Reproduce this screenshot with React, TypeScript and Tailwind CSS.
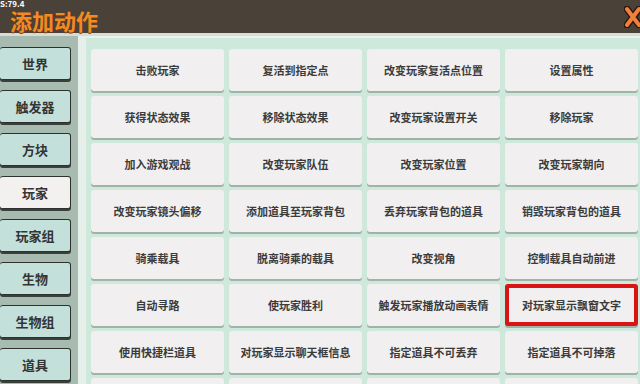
import React from "react";

const CATEGORIES = ["世界", "触发器", "方块", "玩家", "玩家组", "生物", "生物组", "道具"];
const ACTIVE = "玩家";

const ACTIONS = [
  "击败玩家", "复活到指定点", "改变玩家复活点位置", "设置属性",
  "获得状态效果", "移除状态效果", "改变玩家设置开关", "移除玩家",
  "加入游戏观战", "改变玩家队伍", "改变玩家位置", "改变玩家朝向",
  "改变玩家镜头偏移", "添加道具至玩家背包", "丢弃玩家背包的道具", "销毁玩家背包的道具",
  "骑乘载具", "脱离骑乘的载具", "改变视角", "控制载具自动前进",
  "自动寻路", "使玩家胜利", "触发玩家播放动画表情", "对玩家显示飘窗文字",
  "使用快捷栏道具", "对玩家显示聊天框信息", "指定道具不可丢弃", "指定道具不可掉落",
  "", "", "", "",
];
const HIGHLIGHT = "对玩家显示飘窗文字";

const FONT = { fontFamily: '"Noto Sans CJK SC", "Noto Sans", sans-serif' };

export default function App() {
  return (
    <div className="w-[640px] h-[384px] overflow-hidden flex flex-col bg-[#cfe8dc]" style={FONT}>
      {/* header */}
      <header className="relative h-[33px] shrink-0 bg-[#4a4139] flex items-center pl-[10px]">
        <span className="absolute left-0 top-0 text-[8px] leading-[8px] text-white font-bold z-10">S:79.4</span>
        <h1
          className="text-[22px] leading-none font-bold text-[#f38b25] mt-[6px]"
          style={{ textShadow: "0 1px 0 #6b3a10" }}
        >
          添加动作
        </h1>
        <svg className="ml-auto mr-[-2px]" width="18" height="22" viewBox="0 0 18 22">
          <path d="M3 3 L15 19 M15 3 L3 19" stroke="#2a1a10" strokeWidth="7" strokeLinecap="round" />
          <path d="M3 3 L15 19 M15 3 L3 19" stroke="#f3803a" strokeWidth="4" strokeLinecap="round" />
        </svg>
      </header>
      <div className="h-[3px] shrink-0 bg-[#d9dcd6]" />

      <div className="flex flex-1 min-h-0">
        {/* sidebar */}
        <aside className="w-[78px] shrink-0 bg-[#a7bbb0] pt-[11px] flex flex-col gap-[10px]">
          {CATEGORIES.map((c) => (
            <button
              key={c}
              className={`w-[71px] h-[33px] shrink-0 rounded-[3px] border border-[#2e322f] border-l-0 shadow-[0_2px_0_#3a3f3b] text-[13px] font-bold text-[#343434] ${
                c === ACTIVE ? "bg-[#f3f1ef]" : "bg-[#c4e0da]"
              }`}
            >
              {c}
            </button>
          ))}
        </aside>
        <div className="w-[8px] shrink-0 bg-[#e7efea]" />

        {/* action grid */}
        <main className="flex-1 pl-[5px] pt-[11px] border-t-2 border-[#e9f3ee]">
          <div className="grid grid-cols-[repeat(4,133px)] auto-rows-[42px] gap-x-[5px] gap-y-[5px]">
            {ACTIONS.map((a, i) => (
              <div
                key={i}
                className={`rounded-[3px] bg-[#f1efef] shadow-[0_2px_0_#9fb3a8] flex items-center justify-center text-[11px] font-bold text-[#3b3b3b] ${
                  a === HIGHLIGHT ? "border-[4px] border-[#d81414]" : ""
                }`}
              >
                {a}
              </div>
            ))}
          </div>
        </main>
      </div>
    </div>
  );
}
